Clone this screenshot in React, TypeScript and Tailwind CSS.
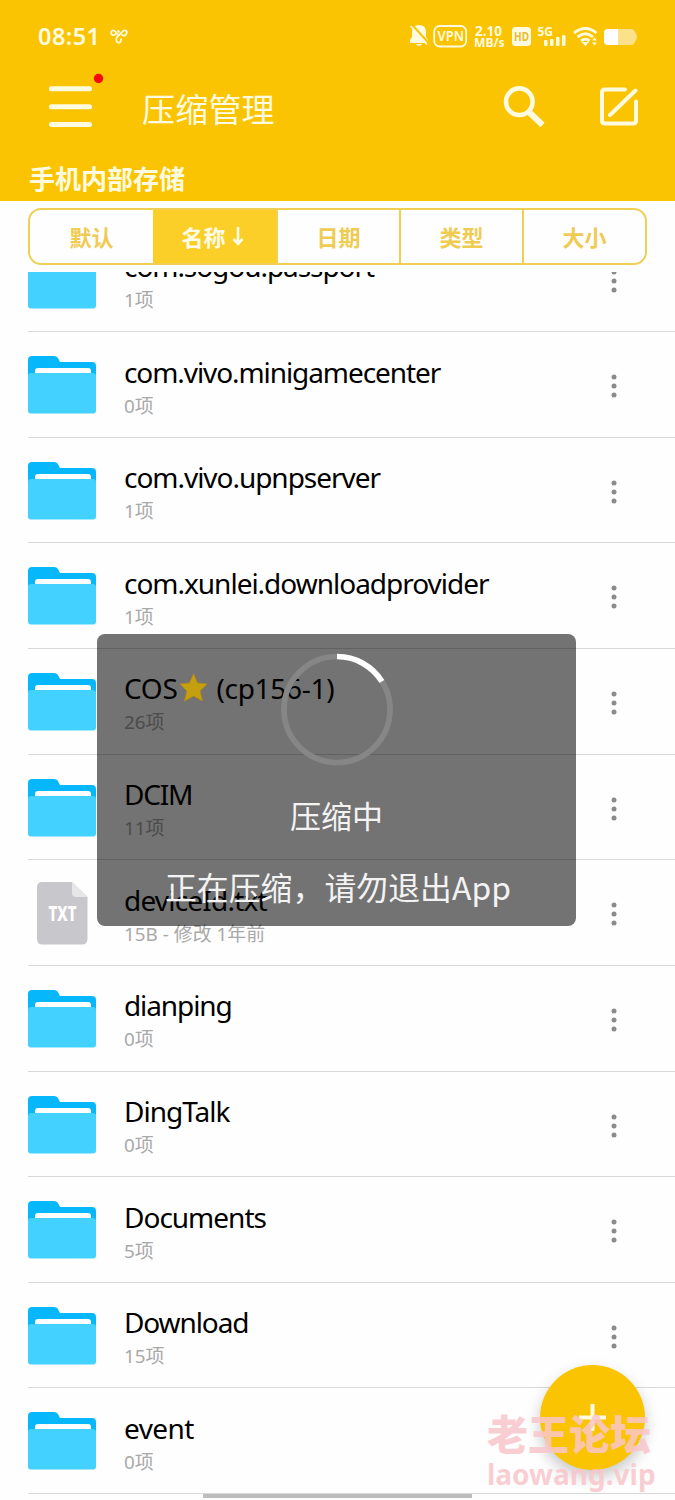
import React from "react";

const latin = "font-['Noto_Sans','Noto_Sans_CJK_SC',sans-serif]";

type Entry = { name: React.ReactNode; meta: string; txt?: boolean; ls: string };

const entries: Entry[] = [
  { name: "com.sogou.passport", meta: "1项", ls: "tracking-[-1.05px]" },
  { name: "com.vivo.minigamecenter", meta: "0项", ls: "tracking-[-1.08px]" },
  { name: "com.vivo.upnpserver", meta: "1项", ls: "tracking-[-1.03px]" },
  { name: "com.xunlei.downloadprovider", meta: "1项", ls: "tracking-[-1.01px]" },
  {
    name: (
      <>
        COS
        <svg className="relative z-10 mr-[1px] ml-[2px] -mt-[8px] inline-block h-[29px] w-[29px]" viewBox="0 0 28 29">
          <path d="M14 1l4 9 9.500 1-7 7 2.500 10L14 23l-9 5 2.500-10-7-7L10 10z" fill="#c4a00f" stroke="#b98a12" strokeWidth=".8" strokeLinejoin="round" />
        </svg>
        {" (cp156-1)"}
      </>
    ),
    meta: "26项",
    ls: "tracking-[-0.3px]",
  },
  { name: "DCIM", meta: "11项", ls: "tracking-[-1.2px]" },
  { name: "deviceId.txt", meta: "15B - 修改 1年前", txt: true, ls: "tracking-[-0.8px]" },
  { name: "dianping", meta: "0项", ls: "tracking-[-1.1px]" },
  { name: "DingTalk", meta: "0项", ls: "tracking-[-1px]" },
  { name: "Documents", meta: "5项", ls: "tracking-[-1px]" },
  { name: "Download", meta: "15项", ls: "tracking-[-1.1px]" },
  { name: "event", meta: "0项", ls: "tracking-[-0.6px]" },
];

function Folder() {
  return (
    <svg className="h-[58px] w-[68px]" viewBox="0 0 68 58">
      <path d="M0 4Q0 0 4 0H26Q29 0 30.500 3L32 6H64Q68 6 68 10V24H0Z" fill="#06b8fb" />
      <path d="M7 20V15Q7 12 10 12H60Q63 12 63 15V20Z" fill="#fff" />
      <path d="M0 20Q0 17 3 17H65Q68 17 68 20V54.500Q68 57.500 65 57.500H3Q0 57.500 0 54.500Z" fill="#43d2ff" />
    </svg>
  );
}

function TxtFile() {
  return (
    <svg className="ml-[9px] h-[63px] w-[51px]" viewBox="0 0 51 63">
      <path d="M5 0H35L50.500 15V57Q50.500 62.500 45 62.500H5.500Q0 62.500 0 57V5.500Q0 0 5 0Z" fill="#c8c7cc" />
      <path d="M35 0L50.500 15H39Q35 15 35 11Z" fill="#e6e6e9" />
      <text x="25.500" y="38.500" textAnchor="middle" textLength="28" lengthAdjust="spacingAndGlyphs" fontFamily="Noto Sans, sans-serif" fontWeight="800" fontSize="21" fill="#fff">TXT</text>
    </svg>
  );
}

function Row({ e }: { e: Entry }) {
  return (
    <div className="ml-[28px] flex h-[105.640px] shrink-0 items-start border-b-[1.500px] border-[#d8d8d8]">
      <div className={e.txt ? "w-[96px] pt-[22px]" : "w-[96px] pt-[24px]"}>{e.txt ? <TxtFile /> : <Folder />}</div>
      <div className="flex-1 pt-[20.300px]">
        <div className={`${latin} ${e.ls} h-[38px] whitespace-nowrap text-[28px] leading-[38px] text-black`}>{e.name}</div>
        <div className={`${latin} mt-[3px] h-[24px] whitespace-nowrap text-[18.900px] leading-[24px] text-[#a9a9a9]`}>{e.meta}</div>
      </div>
      <svg className="mt-[42px] mr-[57px] h-[24px] w-[8px]" viewBox="0 0 8 24" fill="#8b8b8b">
        <circle cx="4" cy="3" r="2.500" />
        <circle cx="4" cy="12" r="2.500" />
        <circle cx="4" cy="21" r="2.500" />
      </svg>
    </div>
  );
}

function StatusIcons() {
  return (
    <svg className="h-[32px] w-[236px]" viewBox="0 0 236 32" fill="#fffbe0">
      <path d="M5 23V20L7 17V12Q7 5 14 5Q21 5 21 12V17L23 20V23ZM11 24H17Q16 26 14 26Q12 26 11 24Z" />
      <path d="M6.500 4L24.500 24" stroke="#fac402" strokeWidth="2" />
      <path d="M5.500 6L22 24.500" stroke="#fffbe0" strokeWidth="1.600" />
      <rect x="29.200" y="6" width="32" height="20.500" rx="5.500" fill="none" stroke="#fffbe0" strokeWidth="1.800" />
      <g fontFamily="Noto Sans, sans-serif" fontWeight="700">
        <text x="32.500" y="21.300" fontSize="14" fontWeight="600" textLength="26.500" lengthAdjust="spacingAndGlyphs">VPN</text>
        <text x="70" y="15.500" fontSize="14" textLength="27" lengthAdjust="spacingAndGlyphs">2.10</text>
        <text x="69" y="27" fontSize="12.500" textLength="30.500" lengthAdjust="spacingAndGlyphs">MB/s</text>
        <rect x="107" y="7" width="19" height="19" rx="3.500" />
        <text x="109" y="21" fontSize="12" fill="#e9bd30" textLength="15" lengthAdjust="spacingAndGlyphs">HD</text>
        <text x="132.500" y="16" fontSize="12.500" textLength="15.500" lengthAdjust="spacingAndGlyphs">5G</text>
      </g>
      <rect x="139" y="20" width="3.500" height="6" rx="1" />
      <rect x="145" y="19" width="3.500" height="7" rx="1" />
      <rect x="151" y="17" width="3.500" height="9" rx="1" />
      <rect x="157" y="15" width="3.500" height="11" rx="1" />
      <g fill="none" stroke="#fffbe0" strokeWidth="2.900">
        <path d="M169 13Q180.500 4 191.500 13" />
        <path d="M172.500 17Q180.500 10.500 188 17" />
        <path d="M176 20.800Q180.500 17.500 184.500 20.800" />
      </g>
      <path d="M176.500 22H184L180.300 26Z" />
      <path d="M187 20.500L189.500 17.500L192 20.500ZM187 22.500H192L189.500 25.500Z" />
      <path d="M203 9H226Q229 9 230 12L232 16V18L230 22Q229 25 226 25H203Q199 25 199 21V13Q199 9 203 9Z" fill="#fce18b" />
      <path d="M213 9H203Q199 9 199 13V21Q199 25 203 25H213Z" fill="#fff" />
    </svg>
  );
}

const tabs = ["默认", "名称", "日期", "类型", "大小"];

export default function App() {
  return (
    <div className="relative flex h-[1500px] w-[675px] flex-col overflow-hidden bg-[#fefefe] font-['Noto_Sans_CJK_SC',sans-serif]">
      <header className="flex h-[200.500px] shrink-0 flex-col bg-[#fac402] text-[#fffbe0]">
        <div className="flex h-[73px] items-start pt-[20px] pl-[38px]">
          <span className={`${latin} w-[72px] text-[23.500px] leading-[32px] font-semibold tracking-[0.450px]`}>08:51</span>
          <svg className="mt-[9px] h-[15px] w-[18px]" viewBox="0 0 18 15" fill="none" stroke="#fffbe0" strokeWidth="1.800">
            <path d="M8.500 6.500L5.500 2.800Q4 1 2.500 1.500Q.8 2.200 1.200 4.200Q2 6.800 4.500 6L7 3.800M7.500 1.500L9.500 3.500M11.500 5.500Q13.500 7.500 15.500 6Q17.500 4 16.500 2.200Q15 .6 13 2.200L7.500 7.500Q5.800 9.500 6.500 12Q7.800 14.400 10 13.200Q11.800 11.800 10.800 9.500" />
          </svg>
          <div className="ml-[277px]"><StatusIcons /></div>
        </div>
        <div className="flex h-[80px] items-start pl-[48px]">
          <svg className="h-[60px] w-[58px]" viewBox="0 0 58 60">
            <path d="M3.500 15.800H41.500M3.500 33.700H41.500M3.500 51.500H41.500" stroke="#fffbe0" strokeWidth="5" strokeLinecap="round" />
            <circle cx="50.500" cy="5.500" r="4.700" fill="#f50a0a" />
          </svg>
          <h1 className="mt-[11px] ml-[36px] w-[360px] text-[33px] leading-[48px] font-normal tracking-[0.200px]">压缩管理</h1>
          <svg className="mt-[12px] h-[46px] w-[44px]" viewBox="0 0 44 46" fill="none" stroke="#fffbe0">
            <circle cx="17.300" cy="16.700" r="13.300" strokeWidth="4.600" />
            <path d="M27 27L40.500 40" strokeWidth="6" />
          </svg>
          <svg className="mt-[13px] ml-[54px] h-[42px] w-[42px]" viewBox="0 0 42 42" fill="none" stroke="#fffbe0" strokeWidth="4" strokeLinecap="round">
            <path d="M25 3.500H5Q2 3.500 2 6.500V34.500Q2 37.500 5 37.500H33Q36 37.500 36 34.500V15.500M10 29L35.500 4.500" />
          </svg>
        </div>
        <div className="h-[46px] pl-[29px] text-[26px] leading-[50px] font-bold">手机内部存储</div>
      </header>

      <div className="flex h-[71.500px] shrink-0 items-start px-[28px] pt-[7.500px]">
        <div className="grid h-[57px] w-[619px] grid-cols-5 overflow-hidden rounded-[13px] border-2 border-[#f0cf55]">
          {tabs.map((t, i) => (
            <div
              key={t}
              className={`flex items-center justify-center pb-[1px] text-[22px] font-bold ${i === 1 ? "bg-[#fbcf27] pr-[4px] text-[#fffce8]" : "text-[#f0cb52]"} ${i > 1 ? "border-l-2 border-[#f0cf55]" : ""}`}
            >
              {t}
              {i === 1 && (
                <svg className="ml-[6px] h-[20px] w-[12px]" viewBox="0 0 12 20" fill="none" stroke="#fffce8" strokeWidth="2.600">
                  <path d="M6 1V18M1.500 13L6 17.800L10.500 13" />
                </svg>
              )}
            </div>
          ))}
        </div>
      </div>

      <main className="flex flex-1 flex-col overflow-hidden">
        <div className="-mt-[45.400px] flex flex-col">
          {entries.map((e, i) => <Row key={i} e={e} />)}
        </div>
      </main>

      <div className="absolute top-[634px] left-[97px] flex h-[292px] w-[479px] flex-col items-center rounded-[8px] bg-black/55 text-[#f3f3f3]">
        <svg className="mt-[19px] h-[113px] w-[113px]" viewBox="0 0 113 113" fill="none" strokeWidth="5.700">
          <circle cx="57" cy="56.500" r="53" stroke="#868686" />
          <path d="M57 3.500A53 53 0 0 1 101.900 28.400" stroke="#fff" />
        </svg>
        <div className="mt-[26px] text-[31px] leading-[46px]">压缩中</div>
        <div className="mt-[25px] pl-[3px] text-[31.800px] leading-[46px] tracking-[0.100px] whitespace-nowrap">正在压缩，请勿退出App</div>
      </div>

      <div className="absolute top-[1365px] left-[540px] flex size-[105px] items-center justify-center rounded-full bg-[#fac402] shadow-[0_7px_15px_rgba(0,0,0,0.22)]">
        <svg className="size-[27px]" viewBox="0 0 27 27" stroke="#fffbe0" strokeWidth="4"><path d="M13.500 0V27M0 13.500H27" /></svg>
      </div>
      <div className="absolute top-[1404px] left-[487px] flex flex-col text-[#f9c6cb]/85">
        <div className="text-[41px] leading-[56px] font-black whitespace-nowrap">老王论坛</div>
        <div className={`${latin} -mt-[4px] text-[28px] leading-[36px] font-bold`}>laowang.vip</div>
      </div>
      <div className="absolute top-[1494px] left-[203px] h-[4px] w-[269px] bg-[#bdbdbd]" />
    </div>
  );
}
